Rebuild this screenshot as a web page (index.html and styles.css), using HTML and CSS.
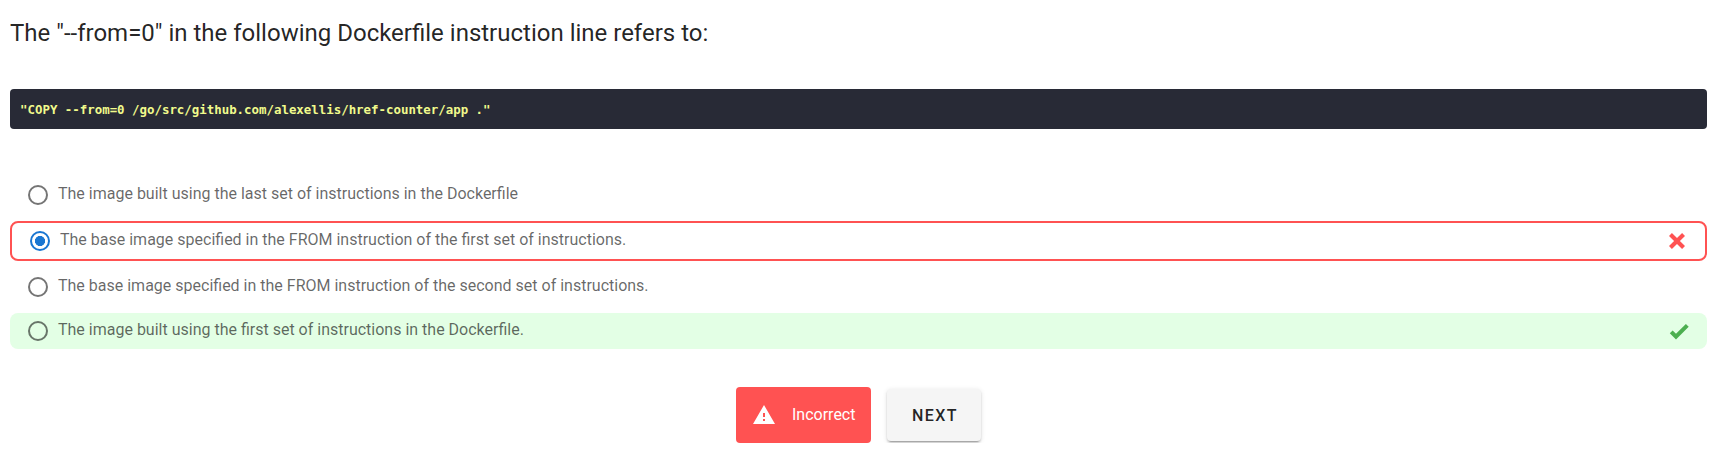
FILE: index.html
```html
<!DOCTYPE html>
<html lang="en">
<head>
<meta charset="utf-8">
<title>Quiz</title>
<link rel="stylesheet" href="styles.css">
</head>
<body>
<main class="quiz">
  <h1 class="question">The "--from=0" in the following Dockerfile instruction line refers to:</h1>
  <pre class="code"><code>"COPY --from=0 /go/src/github.com/alexellis/href-counter/app ."</code></pre>
  <div class="options">
    <div class="option"><span class="radio"></span><span class="label">The image built using the last set of instructions in the Dockerfile</span></div>
    <div class="option wrong"><span class="radio checked"></span><span class="label">The base image specified in the FROM instruction of the first set of instructions.</span>
      <svg class="mark" viewBox="0 0 24 24"><path d="M20 6.91L17.09 4 12 9.09 6.91 4 4 6.91 9.09 12 4 17.09 6.91 20 12 14.91 17.09 20 20 17.09 14.91 12z"/></svg></div>
    <div class="option"><span class="radio"></span><span class="label">The base image specified in the FROM instruction of the second set of instructions.</span></div>
    <div class="option right"><span class="radio"></span><span class="label">The image built using the first set of instructions in the Dockerfile.</span>
      <svg class="mark" viewBox="0 0 24 24"><path d="M9 20.42L2.79 14.21 5.62 11.38 9 14.77 18.88 4.88 21.71 7.71z"/></svg></div>
  </div>
  <div class="actions">
    <div class="alert">
      <svg class="warning" viewBox="0 0 24 24"><path d="M13 14h-2v-4h2m0 8h-2v-2h2M1 21h22L12 2 1 21z"/></svg>
      <span class="alert-text">Incorrect</span>
    </div>
    <button class="next">NEXT</button>
  </div>
</main>
</body>
</html>
```
FILE: styles.css
```css
* { box-sizing: border-box; }
body {
  margin: 0;
  background: #fff;
  font-family: Roboto, sans-serif;
  font-size: 16px;
  color: rgba(0, 0, 0, .87);
}
.quiz { padding: 17px 9px 0 10px; }
.question {
  margin: 0;
  font-size: 24px;
  line-height: 32px;
  font-weight: 400;
}
.code {
  margin: 40px 0 48px;
  height: 40px;
  padding: 1px 10px 0;
  border-radius: 4px;
  background: #282a36;
  color: #f1fa8c;
}
.code code {
  font: bold 12.42px/40px "DejaVu Sans Mono", monospace;
  display: block;
}
.options { display: flex; flex-direction: column; gap: 8px; }
.option {
  display: flex;
  align-items: center;
  height: 36px;
  padding: 0 16px 0 18px;
  border-radius: 8px;
  color: rgba(0, 0, 0, .6);
}
.wrong { height: 40px; border: 2px solid #ff5252; }
.right { background: #e3ffe5; }
.radio {
  width: 20px;
  height: 20px;
  border: 2px solid #757575;
  border-radius: 50%;
}
.right .radio { border-color: #687569; }
.radio.checked {
  border-color: #1976d2;
  background: radial-gradient(circle, #1976d2 4.8px, transparent 5.3px);
}
.label { margin-left: 10px; line-height: 24px; padding-bottom: 2px; }
.mark { width: 24px; height: 24px; margin-left: auto; }
.wrong .mark { fill: #ff5252; }
.right .mark { fill: #4caf50; }
.actions {
  display: flex;
  align-items: center;
  justify-content: center;
  gap: 16px;
  margin-top: 38px;
}
.alert {
  display: flex;
  align-items: center;
  width: 135px;
  height: 56px;
  padding-left: 16px;
  gap: 16px;
  border-radius: 4px;
  background: #ff5252;
  color: #fff;
}
.alert-text { padding-bottom: 2px; }
.warning { width: 24px; height: 24px; fill: #fff; }
.next {
  width: 94px;
  height: 52px;
  padding: 0 0 0 2px;
  border: 0;
  border-radius: 4px;
  background: #f5f5f5;
  color: rgba(0, 0, 0, .87);
  font: 500 16px Roboto, sans-serif;
  letter-spacing: 1.43px;
  box-shadow: 0 3px 1px -2px rgba(0,0,0,.2), 0 2px 2px rgba(0,0,0,.14), 0 1px 5px rgba(0,0,0,.12);
}
```
